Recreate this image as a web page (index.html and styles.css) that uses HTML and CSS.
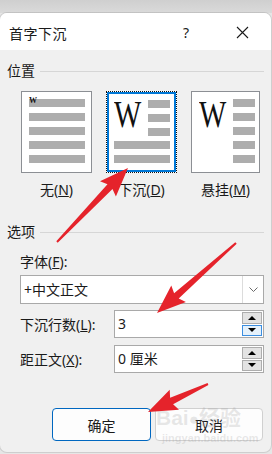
FILE: index.html
```html
<!DOCTYPE html>
<html lang="zh-CN">
<head>
    <meta charset="UTF-8">
    <meta name="viewport" content="width=device-width, initial-scale=1.0">
    <title>首字下沉</title>
    <link rel="stylesheet" href="styles.css">
</head>
<body>
    <div class="page">
        <div class="dialog">
            <div class="titlebar">
                <span class="title">首字下沉</span>
                <span class="help">?</span>
                <span class="close">
                    <svg width="13" height="13" viewBox="0 0 13 13"><path d="M1 1L12 12M12 1L1 12" stroke="#1a1a1a" stroke-width="1.1" fill="none"/></svg>
                </span>
            </div>

            <div class="content">
                <div class="group-head"><span>位置</span><span class="rule"></span></div>

                <div class="positions">
                    <div class="pos">
                        <div class="frame frame-none">
                            <div class="bar bar-first"><span class="tiny-w">W</span></div>
                            <div class="bar"></div>
                            <div class="bar"></div>
                            <div class="bar"></div>
                            <div class="bar"></div>
                        </div>
                        <div class="pos-label">无(<u>N</u>)</div>
                    </div>

                    <div class="pos">
                        <div class="frame frame-selected">
                            <div class="frame-inner">
                                <div class="drop-top">
                                    <span class="big-w">W</span>
                                    <div class="bars-short">
                                        <div class="bar"></div>
                                        <div class="bar"></div>
                                        <div class="bar"></div>
                                    </div>
                                </div>
                                <div class="bar"></div>
                                <div class="bar"></div>
                            </div>
                        </div>
                        <div class="pos-label">下沉(<u>D</u>)</div>
                    </div>

                    <div class="pos pos-last">
                        <div class="frame frame-margin">
                            <span class="big-w">W</span>
                            <div class="bars-short">
                                <div class="bar"></div>
                                <div class="bar"></div>
                                <div class="bar"></div>
                                <div class="bar"></div>
                                <div class="bar"></div>
                            </div>
                        </div>
                        <div class="pos-label">悬挂(<u>M</u>)</div>
                    </div>
                </div>

                <div class="group-head group-options"><span>选项</span><span class="rule"></span></div>

                <div class="options">
                    <div class="field-label">字体(<u>F</u>):</div>
                    <div class="combo">
                        <span class="combo-text">+中文正文</span>
                        <span class="combo-btn">
                            <svg width="9" height="5" viewBox="0 0 9 5"><path d="M0.5 0.5L4.5 4.5L8.5 0.5" stroke="#6a6a6a" stroke-width="1" fill="none"/></svg>
                        </span>
                    </div>

                    <div class="row">
                        <span class="row-label">下沉行数(<u>L</u>):</span>
                        <div class="spin">
                            <span class="spin-text">3</span>
                            <div class="spin-btns">
                                <span class="spin-btn"><i class="tri-up"></i></span>
                                <span class="spin-btn spin-btn-hot"><i class="tri-down"></i></span>
                            </div>
                        </div>
                    </div>

                    <div class="row">
                        <span class="row-label">距正文(<u>X</u>):</span>
                        <div class="spin">
                            <span class="spin-text">0 厘米</span>
                            <div class="spin-btns">
                                <span class="spin-btn"><i class="tri-up"></i></span>
                                <span class="spin-btn"><i class="tri-down"></i></span>
                            </div>
                        </div>
                    </div>
                </div>

                <div class="buttons">
                    <button class="btn btn-default">确定</button>
                    <button class="btn btn-cancel">取消</button>
                </div>
            </div>
        </div>

        <!-- 百度经验水印 -->
        <div class="watermark">
            <div class="wm-logo">Bai<span class="wm-paw">●</span>经验</div>
            <div class="wm-url">jingyan.baidu.com</div>
        </div>

        <!-- 红色标注箭头 -->
        <svg class="arrows" width="272" height="454" viewBox="0 0 272 454">
            <polygon points="56.3,241.3 107.5,184.3 100.0,181.3 128,168 115.9,196.5 112.5,189.1 57.7,242.7" />
            <polygon points="235.3,242.3 174.1,293.2 171.3,285.6 157,313 185.9,302.0 178.7,298.4 236.7,243.7" />
            <polygon points="207.6,383.1 170.1,397.8 169.7,389.7 148,412 179.0,409.7 173.1,404.2 208.4,384.9" />
        </svg>
    </div>
</body>
</html>
```

FILE: styles.css
```css
* {
    box-sizing: border-box;
}

body {
    margin: 0;
    background-color: #e4e4e4;
    font-family: "Noto Sans", "Noto Sans CJK SC", sans-serif;
    font-size: 14px;
    color: #1a1a1a;
}

.page {
    position: relative;
    width: 272px;
    height: 454px;
    overflow: hidden;
    padding-top: 13px;
    background: linear-gradient(#cfcfcf, #dadada 13px, #e6e6e6 13px);
}

.dialog {
    width: 271px;
    height: 439px;
    background-color: #f0f0f0;
    border-radius: 7px;
    overflow: hidden;
    box-shadow: 0 0 0 1px rgba(0, 0, 0, 0.1);
}

.titlebar {
    display: flex;
    align-items: center;
    height: 37px;
    padding: 2px 22px 0 9px;
    background-color: #fff;
}

.title {
    flex: 1;
    font-size: 14px;
    letter-spacing: 0.5px;
}

.help {
    width: 12px;
    text-align: center;
    margin-right: 44px;
}

.close {
    display: flex;
    width: 13px;
}

.content {
    padding: 11px 7px 0 7px;
}

.group-head {
    display: flex;
    align-items: center;
    height: 20px;
    line-height: 20px;
}

.rule {
    flex: 1;
    height: 1px;
    margin-left: 5px;
    background-color: #d6d6d6;
}

/* 位置 */
.positions {
    display: flex;
    gap: 14px;
    margin-top: 10px;
    padding-left: 14px;
}

.pos {
    width: 71px;
}

.pos-last {
    width: 69px;
}

.frame {
    height: 82px;
    background-color: #fff;
    border: 1px solid #8c8f94;
}

.bar {
    height: 8px;
    background-color: #adadad;
}

.frame-none {
    padding: 7px 0 0 7px;
}

.frame-none .bar {
    width: 56px;
    margin-bottom: 6px;
}

.bar-first {
    position: relative;
}

.tiny-w {
    position: absolute;
    left: 0;
    top: -2px;
    font-family: "Liberation Serif", serif;
    font-size: 8px;
    font-weight: bold;
    line-height: 8px;
    color: #111;
}

.frame-selected {
    border: 1px dotted #111;
    padding: 0;
}

.frame-inner {
    height: 80px;
    border: 2px solid #0078d7;
    padding: 5px 0 0 5px;
}

.frame-inner > .bar {
    width: 56px;
    margin-bottom: 6px;
}

.drop-top {
    display: flex;
    height: 42px;
}

.big-w {
    display: block;
    width: 34px;
    font-family: "Liberation Serif", serif;
    font-size: 37px;
    line-height: 31px;
    color: #111;
    transform: scaleX(0.78);
    transform-origin: left top;
}

.bars-short {
    width: 22px;
}

.bars-short .bar {
    margin-bottom: 6px;
}

.frame-selected .bars-short {
    padding-top: 1px;
}

.frame-margin {
    display: flex;
    padding: 7px 0 0 7px;
}

.pos-label {
    margin-top: 7px;
    height: 20px;
    line-height: 20px;
    text-align: center;
}

/* 选项 */
.group-options {
    margin-top: 22px;
}

.options {
    padding-left: 13px;
}

.field-label {
    margin-top: 10px;
    height: 20px;
    line-height: 20px;
}

.combo {
    display: flex;
    height: 29px;
    margin-top: 3px;
    background-color: #fff;
    border: 1px solid #a9a9a9;
}

.combo-text {
    flex: 1;
    padding-left: 3px;
    line-height: 27px;
}

.combo-btn {
    display: flex;
    align-items: center;
    justify-content: center;
    width: 21px;
    border-left: 1px solid #dcdcdc;
}

.row {
    display: flex;
    align-items: center;
    margin-top: 6px;
}

.row + .row {
    margin-top: 7px;
}

.row-label {
    width: 94px;
}

.spin {
    display: flex;
    flex: 1;
    height: 28px;
    background-color: #fff;
    border: 1px solid #a9a9a9;
}

.spin-text {
    flex: 1;
    padding-left: 3px;
    line-height: 26px;
}

.spin-btns {
    display: flex;
    flex-direction: column;
    gap: 1px;
    width: 21px;
    padding: 1px 1px 1px 0;
}

.spin-btn {
    display: flex;
    flex: 1;
    align-items: center;
    justify-content: center;
    background-color: #e3e3e3;
    border: 1px solid #adadad;
}

.spin-btn-hot {
    background-color: #e5f1fb;
    border-color: #3c8ee0;
}

.tri-up {
    width: 0;
    height: 0;
    border-left: 4px solid transparent;
    border-right: 4px solid transparent;
    border-bottom: 4px solid #000;
}

.tri-down {
    width: 0;
    height: 0;
    border-left: 4px solid transparent;
    border-right: 4px solid transparent;
    border-top: 4px solid #000;
}

.buttons {
    display: flex;
    gap: 4px;
    margin-top: 35px;
    padding-left: 45px;
}

.btn {
    height: 33px;
    font-family: inherit;
    font-size: 14px;
    color: #1a1a1a;
    background-color: #fdfdfd;
    border-radius: 4px;
}

.btn-default {
    width: 99px;
    border: 1px solid #0067c0;
}

.btn-cancel {
    width: 108px;
    border: 1px solid #d0d0d0;
}

.watermark {
    position: absolute;
    left: 156px;
    top: 405px;
    color: rgba(150, 150, 150, 0.22);
    pointer-events: none;
}

.wm-logo {
    font-family: "Liberation Sans", "Noto Sans CJK SC", sans-serif;
    font-size: 21px;
    font-weight: bold;
    line-height: 25px;
}

.wm-paw {
    font-size: 17px;
}

.wm-url {
    font-family: "Liberation Sans", sans-serif;
    font-size: 11px;
    font-weight: bold;
    line-height: 13px;
    margin-left: 6px;
}

.arrows {
    position: absolute;
    left: 0;
    top: 0;
    pointer-events: none;
}

.arrows polygon {
    fill: #e5232b;
}
```
